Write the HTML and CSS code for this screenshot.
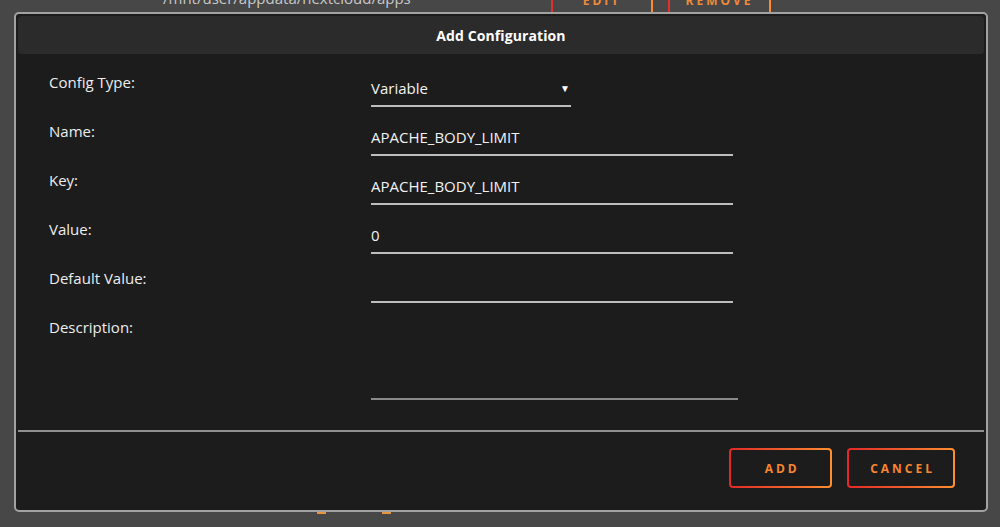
FILE: index.html
```html
<!DOCTYPE html>
<html>
<head>
<meta charset="utf-8">
<link rel="stylesheet" href="styles.css">
</head>
<body>
<div class="backdrop">
  <div class="bg-top">
    <span class="bg-path">/mnt/user/appdata/nextcloud/apps</span>
    <span class="bg-btn bg-edit">EDIT</span>
    <span class="bg-btn bg-remove">REMOVE</span>
  </div>
  <div class="bg-bottom">
    <span class="bg-mark mark-a"></span>
    <span class="bg-mark mark-b"></span>
  </div>
</div>

<div class="dialog">
  <div class="dialog-header">Add Configuration</div>
  <div class="form">
    <div class="row">
      <div class="label">Config Type:</div>
      <div class="select"><span>Variable</span><span class="arrow">▼</span></div>
    </div>
    <div class="row">
      <div class="label">Name:</div>
      <input class="field" type="text" value="APACHE_BODY_LIMIT">
    </div>
    <div class="row">
      <div class="label">Key:</div>
      <input class="field" type="text" value="APACHE_BODY_LIMIT">
    </div>
    <div class="row">
      <div class="label">Value:</div>
      <input class="field" type="text" value="0">
    </div>
    <div class="row">
      <div class="label">Default Value:</div>
      <input class="field" type="text" value="">
    </div>
    <div class="row row-last">
      <div class="label">Description:</div>
      <textarea class="area"></textarea>
    </div>
  </div>
  <div class="divider"></div>
  <div class="footer">
    <button class="btn">ADD</button>
    <button class="btn">CANCEL</button>
  </div>
</div>
</body>
</html>
```

FILE: styles.css
```css
html, body {
  margin: 0;
  padding: 0;
}
body {
  background: #474747;
  font-family: "Open Sans", "Noto Sans", sans-serif;
  height: 527px;
  overflow: hidden;
  position: relative;
}

/* background page (partly covered by the dialog) */
.backdrop {
  height: 527px;
  display: flex;
  flex-direction: column;
}
.bg-top {
  display: flex;
  align-items: flex-start;
  height: 40px;
  margin-top: -22px;
}
.bg-path {
  margin-left: 163px;
  margin-top: 10px;
  font-size: 15px;
  font-weight: 500;
  line-height: 20px;
  color: #c9c9c9;
  width: 388px;
}
.bg-btn {
  box-sizing: border-box;
  height: 40px;
  border: 2px solid transparent;
  border-radius: 4px;
  background: linear-gradient(#474747, #474747) padding-box,
              linear-gradient(90deg, #e22d2d, #ff8c2f) border-box;
  color: #ee8a3a;
  font-weight: 700;
  font-size: 12px;
  letter-spacing: 3px;
  display: flex;
  align-items: center;
  justify-content: center;
  padding-top: 4px;
}
.bg-edit { width: 102px; }
.bg-remove { width: 103px; margin-left: 15px; }

.bg-bottom {
  margin-top: auto;
  height: 2px;
  margin-bottom: 13px;
  display: flex;
}
.bg-mark {
  height: 2px;
  width: 9px;
  background: #e8933e;
}
.mark-a { margin-left: 317px; }
.mark-b { margin-left: 56px; }

/* dialog */
.dialog {
  position: absolute;
  left: 14px;
  top: 12px;
  width: 974px;
  box-sizing: border-box;
  padding: 2px;
  border: 2px solid #a2a2a2;
  border-radius: 5px;
  background: #1c1c1c;
}
.dialog-header {
  height: 38px;
  background: #2b2b2b;
  border-radius: 4px;
  display: flex;
  align-items: center;
  justify-content: center;
  color: #ffffff;
  font-weight: 700;
  font-size: 14px;
  letter-spacing: 0.1px;
}
.form {
  padding: 18px 0 0 31px;
}
.row {
  display: grid;
  grid-template-columns: 322px 1fr;
  margin-bottom: 14px;
  align-items: start;
}
.row-last { margin-bottom: 0; }
.label {
  color: #ededed;
  font-size: 15px;
  font-weight: 500;
  line-height: 20px;
}
.field, .select {
  box-sizing: border-box;
  width: 362px;
  height: 35px;
  padding: 6px 0 7px;
  border: 0;
  border-bottom: 2px solid #bdbdbd;
  background: transparent;
  color: #f2f2f2;
  font-family: "Open Sans", "Noto Sans", sans-serif;
  font-size: 15px;
  font-weight: 500;
  line-height: 20px;
  outline: none;
  margin: 0;
}
.select {
  width: 200px;
  display: flex;
  justify-content: space-between;
  align-items: center;
  padding-right: 1px;
}
.arrow {
  font-size: 10px;
  color: #ffffff;
  line-height: 20px;
}
.area {
  box-sizing: border-box;
  width: 367px;
  height: 83px;
  border: 0;
  border-bottom: 2px solid #8a8a8a;
  background: transparent;
  resize: none;
  outline: none;
  margin: 0;
  padding: 0;
  color: #f2f2f2;
  font-family: "Open Sans", "Noto Sans", sans-serif;
  font-size: 15px;
  display: block;
}
.divider {
  height: 2px;
  background: #8f8f8f;
  margin-top: 30px;
}
.footer {
  display: flex;
  justify-content: flex-end;
  gap: 15px;
  padding: 16px 29px 20px 0;
}
.btn {
  box-sizing: border-box;
  height: 40px;
  min-width: 103px;
  padding: 0 18px 0 21px;
  border: 2px solid transparent;
  border-radius: 4px;
  background: linear-gradient(#1c1c1c, #1c1c1c) padding-box,
              linear-gradient(90deg, #e22828, #ff8f30) border-box;
  color: #f5862f;
  font-family: "Open Sans", "Noto Sans", sans-serif;
  font-weight: 700;
  font-size: 12px;
  letter-spacing: 3px;
  cursor: pointer;
}
```
